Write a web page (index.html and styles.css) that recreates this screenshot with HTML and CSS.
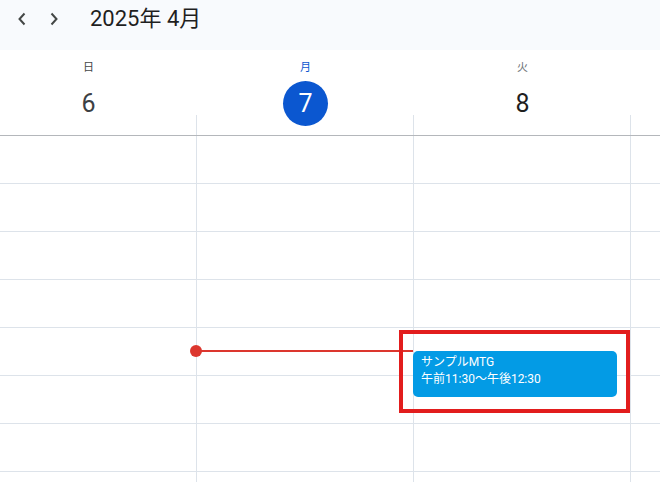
FILE: index.html
```html
<!DOCTYPE html>
<html lang="ja">
<head>
<meta charset="UTF-8">
<meta name="viewport" content="width=device-width, initial-scale=1.0">
<title>カレンダー</title>
<link rel="stylesheet" href="styles.css">
</head>
<body>
  <!-- top bar with month navigation -->
  <div class="topbar">
    <button class="nav" aria-label="前の週">
      <svg width="10" height="14" viewBox="0 0 10 14"><path d="M7.5 1.5 L2.5 7 L7.5 12.5" fill="none" stroke="#444746" stroke-width="2"/></svg>
    </button>
    <button class="nav" aria-label="次の週">
      <svg width="10" height="14" viewBox="0 0 10 14"><path d="M2.5 1.5 L7.5 7 L2.5 12.5" fill="none" stroke="#444746" stroke-width="2"/></svg>
    </button>
    <h1 class="title">2025年 4月</h1>
  </div>

  <!-- day headers -->
  <div class="days">
    <div class="day-head">
      <div class="dname">日</div>
      <div class="dnum">6</div>
    </div>
    <div class="day-head today">
      <div class="dname">月</div>
      <div class="dnum">7</div>
    </div>
    <div class="day-head">
      <div class="dname tue">火</div>
      <div class="dnum tue">8</div>
    </div>
    <div class="day-head"></div>
  </div>

  <!-- time grid -->
  <div class="grid">
    <div class="col"></div>
    <div class="col">
      <div class="now-dot"></div>
      <div class="now-line"></div>
    </div>
    <div class="col">
      <div class="event">
        <div>サンプルMTG</div>
        <div>午前11:30～午後12:30</div>
      </div>
      <div class="mark"></div>
    </div>
    <div class="col"></div>
  </div>
</body>
</html>
```

FILE: styles.css
```css
body {
  margin: 0;
  overflow: hidden;
  background: #fff;
  font-family: Roboto, "Noto Sans CJK JP", sans-serif;
  color: #1f1f1f;
}
.topbar {
  height: 50px;
  background: #f8fafd;
  display: flex;
  align-items: flex-start;
  padding: 4px 0 0 6px;
  box-sizing: border-box;
}
.nav {
  width: 32px;
  height: 30px;
  border: none;
  background: none;
  padding: 0;
  display: flex;
  align-items: center;
  justify-content: center;
}
.title {
  margin: 0 0 0 20px;
  font-size: 22px;
  font-weight: 400;
  line-height: 30px;
  color: #1f1f1f;
}
.days {
  display: grid;
  grid-template-columns: repeat(3, 217px) 1fr;
  margin-left: -20px;
  height: 85px;
  border-bottom: 1px solid #b4b7bb;
}
.day-head {
  position: relative;
  display: flex;
  flex-direction: column;
  align-items: center;
  padding-top: 10px;
}
.day-head::after {
  content: "";
  position: absolute;
  right: 0;
  bottom: 0;
  width: 1px;
  height: 20px;
  background: #dde3ea;
}
.day-head:last-child::after {
  display: none;
}
.dname {
  font-size: 11px;
  line-height: 16px;
  color: #444746;
}
.dnum {
  margin-top: 5px;
  width: 45px;
  height: 45px;
  border-radius: 50%;
  font-size: 25px;
  line-height: 45px;
  text-align: center;
  color: #3c4043;
}
.tue {
  color: #70757a;
}
.dnum.tue {
  color: #1f1f1f;
}
.today .dname {
  color: #0b57d0;
}
.today .dnum {
  background: #0b57d0;
  color: #fff;
}
.grid {
  display: grid;
  grid-template-columns: repeat(3, 217px) 1fr;
  margin-left: -20px;
  height: 346px;
  background: repeating-linear-gradient(to bottom, transparent 0 47px, #dde3ea 47px 48px);
}
.col {
  position: relative;
  border-right: 1px solid #dde3ea;
}
.col:last-child {
  border-right: none;
}
.now-dot {
  position: absolute;
  left: -7px;
  top: 209px;
  width: 12px;
  height: 12px;
  border-radius: 50%;
  background: #dc362e;
  z-index: 2;
}
.now-line {
  position: absolute;
  left: 0;
  top: 214px;
  width: 216px;
  height: 2px;
  background: #dc362e;
}
.event {
  position: absolute;
  left: -1px;
  top: 215px;
  width: 204px;
  height: 46px;
  box-sizing: border-box;
  padding: 3px 8px;
  border-radius: 5px;
  background: #039be5;
  color: #fff;
  font-size: 12px;
  line-height: 17px;
  z-index: 1;
}
.mark {
  position: absolute;
  left: -15px;
  top: 194px;
  width: 231px;
  height: 83px;
  box-sizing: border-box;
  border: 4px solid #e21d1d;
  z-index: 3;
}
```
